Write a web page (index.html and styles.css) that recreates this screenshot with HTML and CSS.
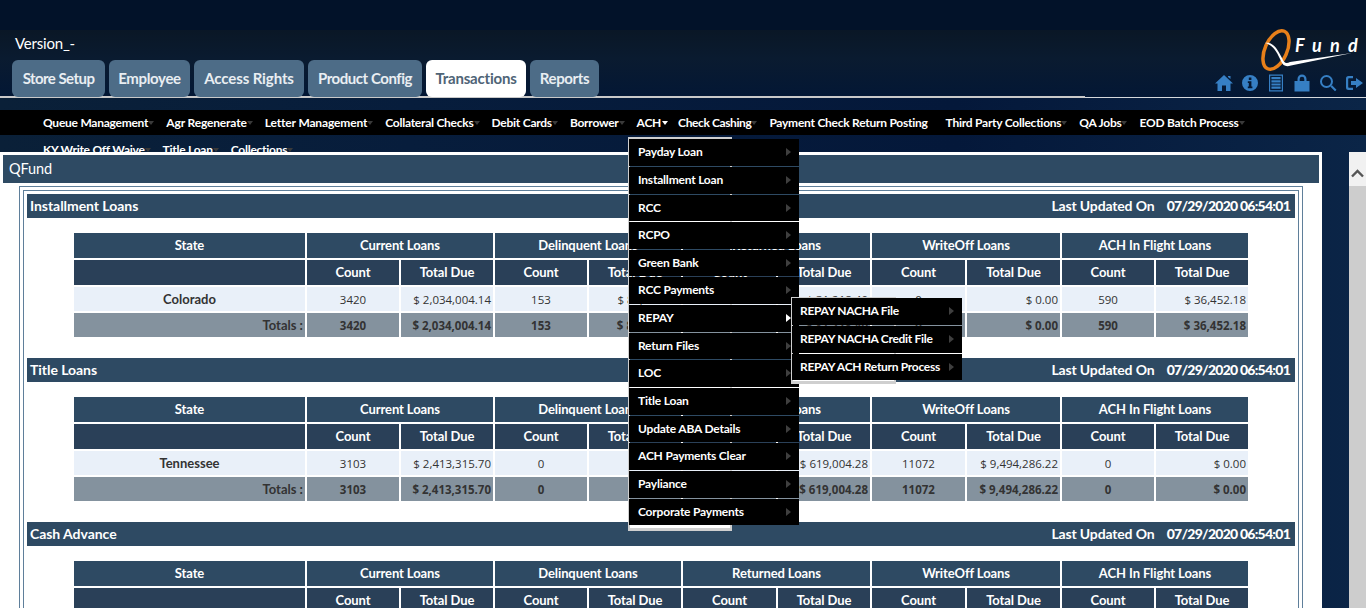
FILE: index.html
```html
<!DOCTYPE html>
<html lang="en">
<head>
    <meta charset="UTF-8">
    <title>QFund</title>
    <link rel="stylesheet" href="styles.css">
</head>
<body>
    <header class="top">
        <div class="top-left">
            <div class="version">Version_-</div>
            <ul class="tabs">
                <li class="tab">Store Setup</li>
                <li class="tab">Employee</li>
                <li class="tab">Access Rights</li>
                <li class="tab">Product Config</li>
                <li class="tab active">Transactions</li>
                <li class="tab">Reports</li>
            </ul>
        </div>
        <div class="top-right">
            <svg class="logo" width="102" height="44" viewBox="0 0 102 44">
                <ellipse cx="16" cy="22" rx="11" ry="20.5" transform="rotate(24 16 22)" fill="none" stroke="#e8801a" stroke-width="3.5"/>
                <path d="M5 15 C13 13 18 22 22 30 C24 35 26 36 30 34 L92 25 L31 37.5 C26 39 23 38 21 33 C17 24 13 17 5 15 Z" fill="#fff"/>
                <text class="logo-text" x="35" y="24">F</text>
                <text class="logo-text" x="52" y="24">u</text>
                <text class="logo-text" x="70" y="24">n</text>
                <text class="logo-text" x="88" y="24">d</text>
            </svg>
            <div class="icons">
                <svg class="icon" viewBox="0 0 18 18"><path d="M9 1 L18 9.5 L15.5 9.5 L15.5 17 L11 17 L11 11.5 L7 11.5 L7 17 L2.5 17 L2.5 9.5 L0 9.5 Z M13 2 H15.5 V5 L13 3 Z"/></svg>
                <svg class="icon" viewBox="0 0 18 18"><path fill-rule="evenodd" d="M9 1 A8 8 0 1 0 9 17 A8 8 0 1 0 9 1 Z M7.8 3.5 H10.4 V6 H7.8 Z M6.8 7.3 H10.4 V12.6 H11.4 V14.2 H6.8 V12.6 H7.8 V8.9 H6.8 Z"/></svg>
                <svg class="icon" viewBox="0 0 18 18"><path fill-rule="evenodd" d="M2 0.5 H16 V17.5 H2 Z M3.2 1.8 V16.2 H14.8 V1.8 Z M4.4 3 H13.6 V5.2 H4.4 Z M4.4 6.2 H13.6 V8.4 H4.4 Z M4.4 9.4 H13.6 V11.6 H4.4 Z M4.4 12.6 H13.6 V14.8 H4.4 Z"/></svg>
                <svg class="icon" viewBox="0 0 18 18"><path fill-rule="evenodd" d="M1.5 7 H4.5 V5 A4.5 4.5 0 0 1 13.5 5 V7 H16.5 V17.5 H1.5 Z M6.7 7 H11.3 V5 A2.3 2.3 0 0 0 6.7 5 Z"/></svg>
                <svg class="icon" viewBox="0 0 18 18"><path fill-rule="evenodd" d="M7.5 1 A6.5 6.5 0 1 0 7.5 14 A6.5 6.5 0 1 0 7.5 1 Z M7.5 3 A4.5 4.5 0 1 1 7.5 12 A4.5 4.5 0 1 1 7.5 3 Z M11.5 12.8 L13 11.3 L17.5 15.8 L16 17.3 Z"/></svg>
                <svg class="icon" viewBox="0 0 18 18"><path d="M8 2 H3.5 A2.5 2.5 0 0 0 1 4.5 V13.5 A2.5 2.5 0 0 0 3.5 16 H8 V13.8 H4 A0.8 0.8 0 0 1 3.2 13 V5 A0.8 0.8 0 0 1 4 4.2 H8 Z M11 4 L18 9 L11 14 V11 H6 V7 H11 Z"/></svg>
            </div>
        </div>
    </header>

    <nav class="menu">
        <ul class="menu-row">
            <li class="menu-item">Queue Management<span class="caret"></span></li>
            <li class="menu-item">Agr Regenerate<span class="caret"></span></li>
            <li class="menu-item">Letter Management<span class="caret"></span></li>
            <li class="menu-item">Collateral Checks<span class="caret"></span></li>
            <li class="menu-item">Debit Cards<span class="caret"></span></li>
            <li class="menu-item">Borrower<span class="caret"></span></li>
            <li class="menu-item open">ACH<span class="caret"></span></li>
            <li class="menu-item">Check Cashing<span class="caret"></span></li>
            <li class="menu-item">Payment Check Return Posting</li>
            <li class="menu-item">Third Party Collections<span class="caret"></span></li>
            <li class="menu-item">QA Jobs<span class="caret"></span></li>
            <li class="menu-item">EOD Batch Process<span class="caret"></span></li>
            <li class="menu-item">KY Write Off Waive<span class="caret"></span></li>
            <li class="menu-item">Title Loan<span class="caret"></span></li>
            <li class="menu-item">Collections<span class="caret"></span></li>
        </ul>

        <div class="drop-frame ach-frame"></div>
        <ul class="drop ach-drop">
            <li>Payday Loan<span class="arrow"></span></li>
            <li>Installment Loan<span class="arrow"></span></li>
            <li>RCC<span class="arrow"></span></li>
            <li>RCPO<span class="arrow"></span></li>
            <li>Green Bank<span class="arrow"></span></li>
            <li>RCC Payments<span class="arrow"></span></li>
            <li>REPAY<span class="arrow on"></span></li>
            <li>Return Files<span class="arrow"></span></li>
            <li>LOC<span class="arrow"></span></li>
            <li>Title Loan<span class="arrow"></span></li>
            <li>Update ABA Details<span class="arrow"></span></li>
            <li>ACH Payments Clear<span class="arrow"></span></li>
            <li>Payliance<span class="arrow"></span></li>
            <li>Corporate Payments<span class="arrow"></span></li>
        </ul>
        <div class="drop-frame repay-frame"></div>
        <ul class="drop repay-drop">
            <li>REPAY NACHA File<span class="arrow"></span></li>
            <li>REPAY NACHA Credit File<span class="arrow"></span></li>
            <li>REPAY ACH Return Process<span class="arrow"></span></li>
        </ul>
    </nav>

    <main class="page">
        <section class="panel">
            <div class="panel-title">QFund</div>
            <div class="box-outer">
                <div class="box-inner">

                    <div class="section-head">
                        <span>Installment Loans</span>
                        <span class="updated">Last Updated On <b>07/29/2020 06:54:01</b></span>
                    </div>
                    <table class="grid">
                        <colgroup>
                            <col class="c-state"><col class="c-92"><col class="c-92"><col class="c-92"><col class="c-92"><col class="c-93"><col class="c-92"><col class="c-93"><col class="c-93"><col class="c-92"><col class="c-92">
                        </colgroup>
                        <tr class="head1">
                            <th>State</th><th colspan="2">Current Loans</th><th colspan="2">Delinquent Loans</th><th colspan="2">Returned Loans</th><th colspan="2">WriteOff Loans</th><th colspan="2">ACH In Flight Loans</th>
                        </tr>
                        <tr class="head2">
                            <th></th><th>Count</th><th>Total Due</th><th>Count</th><th>Total Due</th><th>Count</th><th>Total Due</th><th>Count</th><th>Total Due</th><th>Count</th><th>Total Due</th>
                        </tr>
                        <tr class="data">
                            <td class="name">Colorado</td><td>3420</td><td class="money">$ 2,034,004.14</td><td>153</td><td class="money">$ 84,120.36</td><td>62</td><td class="money">$ 31,218.40</td><td>0</td><td class="money">$ 0.00</td><td>590</td><td class="money">$ 36,452.18</td>
                        </tr>
                        <tr class="totals">
                            <td class="label">Totals :</td><td>3420</td><td class="money">$ 2,034,004.14</td><td>153</td><td class="money">$ 84,120.36</td><td>62</td><td class="money">$ 31,218.40</td><td>0</td><td class="money">$ 0.00</td><td>590</td><td class="money">$ 36,452.18</td>
                        </tr>
                    </table>

                    <div class="section-head">
                        <span>Title Loans</span>
                        <span class="updated">Last Updated On <b>07/29/2020 06:54:01</b></span>
                    </div>
                    <table class="grid">
                        <colgroup>
                            <col class="c-state"><col class="c-92"><col class="c-92"><col class="c-92"><col class="c-92"><col class="c-93"><col class="c-92"><col class="c-93"><col class="c-93"><col class="c-92"><col class="c-92">
                        </colgroup>
                        <tr class="head1">
                            <th>State</th><th colspan="2">Current Loans</th><th colspan="2">Delinquent Loans</th><th colspan="2">Returned Loans</th><th colspan="2">WriteOff Loans</th><th colspan="2">ACH In Flight Loans</th>
                        </tr>
                        <tr class="head2">
                            <th></th><th>Count</th><th>Total Due</th><th>Count</th><th>Total Due</th><th>Count</th><th>Total Due</th><th>Count</th><th>Total Due</th><th>Count</th><th>Total Due</th>
                        </tr>
                        <tr class="data">
                            <td class="name">Tennessee</td><td>3103</td><td class="money">$ 2,413,315.70</td><td>0</td><td class="money">$ 0.00</td><td>840</td><td class="money">$ 619,004.28</td><td>11072</td><td class="money">$ 9,494,286.22</td><td>0</td><td class="money">$ 0.00</td>
                        </tr>
                        <tr class="totals">
                            <td class="label">Totals :</td><td>3103</td><td class="money">$ 2,413,315.70</td><td>0</td><td class="money">$ 0.00</td><td>840</td><td class="money">$ 619,004.28</td><td>11072</td><td class="money">$ 9,494,286.22</td><td>0</td><td class="money">$ 0.00</td>
                        </tr>
                    </table>

                    <div class="section-head">
                        <span>Cash Advance</span>
                        <span class="updated">Last Updated On <b>07/29/2020 06:54:01</b></span>
                    </div>
                    <table class="grid">
                        <colgroup>
                            <col class="c-state"><col class="c-92"><col class="c-92"><col class="c-92"><col class="c-92"><col class="c-93"><col class="c-92"><col class="c-93"><col class="c-93"><col class="c-92"><col class="c-92">
                        </colgroup>
                        <tr class="head1">
                            <th>State</th><th colspan="2">Current Loans</th><th colspan="2">Delinquent Loans</th><th colspan="2">Returned Loans</th><th colspan="2">WriteOff Loans</th><th colspan="2">ACH In Flight Loans</th>
                        </tr>
                        <tr class="head2">
                            <th></th><th>Count</th><th>Total Due</th><th>Count</th><th>Total Due</th><th>Count</th><th>Total Due</th><th>Count</th><th>Total Due</th><th>Count</th><th>Total Due</th>
                        </tr>
                    </table>

                </div>
            </div>
        </section>

        <div class="scrollbar">
            <div class="scroll-up">
                <svg width="13" height="9" viewBox="0 0 13 9"><path d="M1 7.5 L6.5 2 L12 7.5" fill="none" stroke="#555" stroke-width="2.4"/></svg>
            </div>
            <div class="scroll-thumb"></div>
        </div>
    </main>
</body>
</html>
```

FILE: styles.css
```css
html, body {
    height: 608px;
    overflow: hidden;
}
body {
    margin: 0;
    font-family: Lato, "Open Sans", sans-serif;
    color: #fff;
    background-color: #041733;
    background-image: linear-gradient(90deg, #0a2038 0%, #071d3c 30%, #04183a 70%, #0b2547 100%);
}
ul {
    list-style: none;
    margin: 0;
    padding: 0;
}

/* header */
.top {
    display: flex;
    height: 68px;
    padding-top: 30px;
    background: linear-gradient(180deg, #021229 0, #021229 30px, #0a1726 30px, #0a1b30 60%, #031735 100%);
}
.top-left {
    width: 1085px;
    box-sizing: border-box;
    border-bottom: 2px solid #c9c9c9;
    padding-top: 4px;
}
.version {
    font-size: 15px;
    line-height: 18px;
    padding-left: 15px;
    letter-spacing: -0.2px;
}
.tabs {
    display: flex;
    gap: 4px;
    margin-top: 8px;
    padding-left: 12px;
}
.tab {
    height: 37px;
    box-sizing: border-box;
    text-align: center;
    line-height: 36px;
    font-size: 15px;
    font-weight: 700;
    letter-spacing: -0.35px;
    color: #e9eef2;
    background-color: #4d6c87;
    border-radius: 6px;
}
.tab:nth-child(1) { width: 93px; letter-spacing: -0.55px; }
.tab:nth-child(2) { width: 81px; }
.tab:nth-child(3) { width: 110px; letter-spacing: -0.1px; }
.tab:nth-child(4) { width: 114px; letter-spacing: -0.45px; }
.tab:nth-child(5) { width: 100px; letter-spacing: -0.2px; }
.tab:nth-child(6) { width: 69px; }
.tab.active {
    background-color: #fff;
    color: #4f6476;
}
.top-right {
    flex: 1;
    border-bottom: 1px solid #d5d8dc;
    height: 67px;
    display: flex;
    flex-direction: column;
    align-items: flex-end;
}
.logo {
    margin: -2px 4px 0 0;
}
.logo-text {
    font-family: Lato, sans-serif;
    font-size: 18px;
    font-weight: 700;
    font-style: italic;
    fill: #fff;
}
.icons {
    display: flex;
    gap: 8px;
    padding-right: 3px;
    margin-top: 2px;
}
.icon {
    width: 18px;
    height: 18px;
    fill: #367fc4;
}

/* menu bar */
.menu {
    margin-top: 12px;
    margin-bottom: 17px;
    height: 25px;
    background-color: #000;
    position: relative;
    font-size: 12px;
    font-weight: 700;
}
.menu-row {
    display: flex;
    flex-wrap: wrap;
    padding-left: 43px;
    column-gap: 18px;
    width: 1240px;
}
.menu-item {
    height: 27px;
    line-height: 26px;
    letter-spacing: -0.25px;
    white-space: nowrap;
    position: relative;
}
.menu-item:nth-child(2), .menu-item:nth-child(3) {
    letter-spacing: -0.15px;
}
.menu-item:nth-child(8) {
    letter-spacing: -0.4px;
}
.menu-item.open {
    margin-right: -1px;
}
.caret {
    position: absolute;
    right: -6px;
    top: 11px;
    border: 3px solid transparent;
    border-top: 4px solid #3a3a3a;
    border-bottom: 0;
}
.open .caret {
    border-top-color: #fff;
    right: -7px;
}

/* dropdowns */
.drop {
    position: absolute;
    z-index: 5;
    display: flex;
    flex-direction: column;
    gap: 1px;
}
.drop li {
    height: 26.66px;
    background-color: #000;
    line-height: 26px;
    padding-left: 9px;
    position: relative;
    letter-spacing: -0.2px;
}
.ach-drop {
    left: 629px;
    top: 29.2px;
    width: 170px;
}
.repay-drop {
    left: 792px;
    top: 188.3px;
    width: 170px;
    z-index: 6;
}
.repay-drop li {
    padding-left: 8px;
    letter-spacing: -0.3px;
}
.arrow {
    position: absolute;
    right: 8px;
    top: 9px;
    border: 4px solid transparent;
    border-left: 5px solid #3f3f3f;
    border-right: 0;
}
.arrow.on {
    border-left-color: #fff;
}
.drop-frame {
    position: absolute;
    z-index: 4;
    box-sizing: border-box;
    border: 2px solid #cfcfcf;
    border-bottom-width: 3px;
    box-shadow: inset 0 -5px 0 #fff;
}
.ach-frame {
    left: 628px;
    top: 27px;
    width: 104px;
    height: 394px;
}
.repay-frame {
    left: 791px;
    top: 187px;
    width: 105px;
    height: 87px;
    z-index: 5;
}

/* content */
.page {
    display: flex;
    height: 456px;
}
.panel {
    width: 1322px;
    background-color: #fff;
    position: relative;
    z-index: 1;
    overflow: hidden;
}
.panel-title {
    margin: 3px 3px 0;
    height: 28px;
    line-height: 28px;
    padding-left: 6px;
    background-color: #2e4a63;
    font-size: 14.5px;
    letter-spacing: -0.1px;
}
.box-outer {
    margin: 3px 19px 0;
    border: 1px solid #5f7f9a;
    padding: 3px;
}
.box-inner {
    border: 1px solid #5f7f9a;
    padding: 3px;
}
.section-head {
    display: flex;
    justify-content: space-between;
    height: 24px;
    line-height: 24px;
    padding: 0 5px 0 3px;
    background-color: #2e4a63;
    font-size: 14px;
    font-weight: 700;
    letter-spacing: -0.05px;
}
.updated {
    letter-spacing: -0.15px;
}
.updated b {
    margin-left: 9px;
    letter-spacing: -0.75px;
}
.grid {
    table-layout: fixed;
    width: 1178px;
    margin: 13px auto 19px;
    border-collapse: separate;
    border-spacing: 2px;
    font-size: 13px;
}
.c-state { width: 231px; }
.c-92 { width: 92px; }
.c-93 { width: 93px; }
.grid th, .grid td {
    padding: 0 2px;
    overflow: hidden;
    white-space: nowrap;
    text-align: center;
}
.grid th {
    padding-bottom: 2px;
    letter-spacing: -0.1px;
}
.head1 th {
    height: 23px;
    background-color: #2e4a63;
}
.head2 th {
    height: 23px;
    background-color: #2a4058;
}
.grid td {
    height: 24px;
    color: #333;
    font-family: "Open Sans", sans-serif;
    font-size: 11.5px;
}
.grid td.money {
    text-align: right;
}
.data td {
    background-color: #e9f0f9;
}
.data td.name {
    font-family: Lato, sans-serif;
    font-size: 13px;
    font-weight: 700;
}
.totals td {
    background-color: #84929e;
    font-weight: 700;
}
.totals td.label {
    font-family: Lato, sans-serif;
    font-size: 13px;
    text-align: right;
}

/* scrollbar */
.scrollbar {
    width: 17px;
    margin-left: 27px;
    background-color: #cdcdcd;
    display: flex;
    flex-direction: column;
}
.scroll-up {
    height: 34px;
    background-color: #f1f1f1;
    display: flex;
    justify-content: center;
    padding-top: 17px;
    box-sizing: border-box;
}
.scroll-thumb {
    flex: 1;
}
```
